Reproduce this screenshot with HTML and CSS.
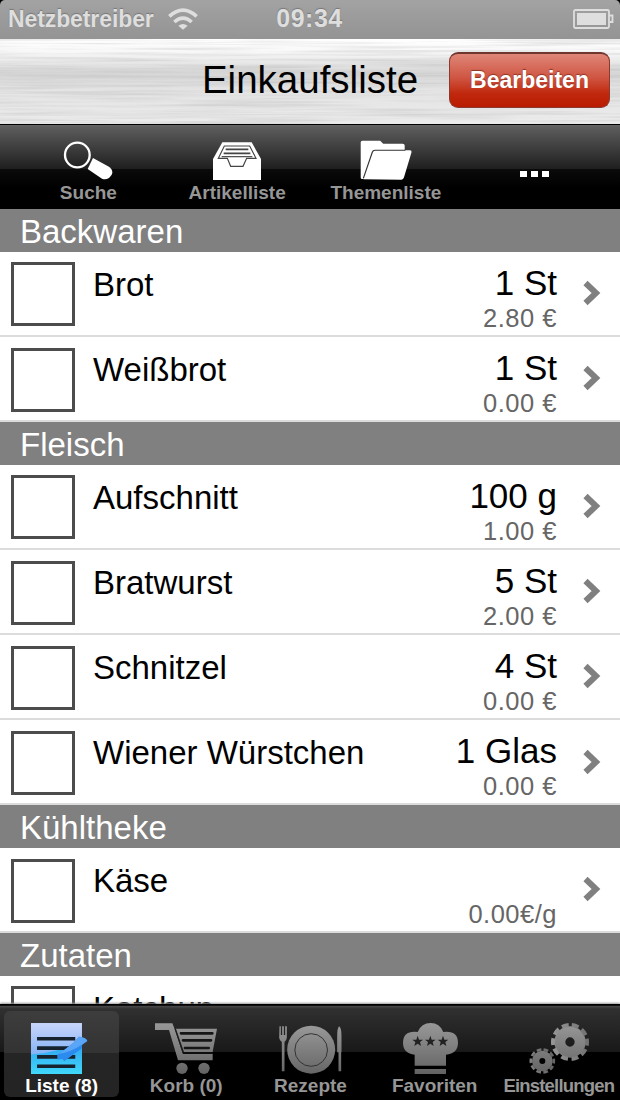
FILE: index.html
```html
<!DOCTYPE html>
<html lang="de">
<head>
  <meta charset="UTF-8" />
  <meta name="viewport" content="width=device-width, initial-scale=1.0" />
  <title>Einkaufsliste</title>
  <link rel="stylesheet" href="styles.css">
</head>

<body>
  <div class="app">
    <div class="statusbar">
      <div class="netz">
        <span>Netzbetreiber</span>
        <svg width="30" height="22" viewBox="0 0 90 66">
          <g fill="none" stroke="#dedede" stroke-width="11">
            <path d="M4 25 Q45 -12 86 25" />
            <path d="M19 42 Q45 19 71 42" />
          </g>
          <path d="M45 65 L31 53 Q45 43 59 53 Z" fill="#dedede" />
        </svg>
      </div>
      <span class="uhr">09:34</span>
      <svg class="akku" width="41" height="20" viewBox="0 0 41 20">
        <rect x="1" y="1" width="35" height="18" rx="1.5" fill="none" stroke="#dedede" stroke-width="1.8" />
        <rect x="4" y="4" width="29" height="12" fill="#dedede" />
        <path d="M36.500 6.500 H39.500 V13 H36.500" fill="none" stroke="#dedede" stroke-width="1.800" />
      </svg>
    </div>

    <header class="titel">
      <svg class="metall" width="620" height="85">
        <filter id="metall" x="0" y="0" width="100%" height="100%">
          <feTurbulence type="fractalNoise" baseFrequency="0.006 0.35" numOctaves="3" seed="4" />
          <feColorMatrix values="0 0 0 0 0.4  0 0 0 0 0.4  0 0 0 0 0.4  0.7 0 0 0 -0.27" />
        </filter>
        <rect width="620" height="85" filter="url(#metall)" />
      </svg>
      <h1>Einkaufsliste</h1>
      <button class="bearbeiten">Bearbeiten</button>
    </header>

    <nav class="toolbar">
      <a>
        <svg width="50" height="41" viewBox="0 0 150 123">
          <circle cx="43" cy="48" r="37" fill="none" stroke="#fff" stroke-width="7" />
          <path d="M90 57 L135 82 Q153 93 146 107 Q134 126 117 119 L74 90 Z" fill="#fff" />
        </svg>
        <span>Suche</span>
      </a>
      <a>
        <svg width="48" height="38" viewBox="0 0 144 114">
          <path d="M28 1 H116 L144 51 V114 H0 V51 Z" fill="#fff" />
          <g fill="none" stroke="#444" stroke-width="3.500">
            <path d="M34 12 H110 L129 49 H101 L90 73 H53 L43 49 H16 Z" />
            <path d="M38 22 H106 M32 34 H112" stroke-width="5" />
            <path d="M26 44 H118" />
          </g>
        </svg>
        <span>Artikelliste</span>
      </a>
      <a>
        <svg width="52" height="40" viewBox="0 0 157 121">
          <path d="M2 7 Q2 2 7 2 H61 L70 11 H129 Q135 11 135 17 V60 L110 118 H6 Q2 118 2 114 Z" fill="#fff" />
          <path d="M10 119 L37 37 Q39 31 45 31 H150 Q158 31 155 39 L133 113 Q131 120 125 120 Z" fill="#fff" />
          <path d="M10 116 L37 37 Q39 31 45 31 H137" fill="none" stroke="#333" stroke-width="3.500" />
        </svg>
        <span>Themenliste</span>
      </a>
      <a class="mehr"><i></i><i></i><i></i></a>
    </nav>

    <main class="liste">
      <h2>Backwaren</h2>
      <div class="artikel">
        <span class="box"></span>
        <p class="name">Brot</p>
        <div class="menge"><b>1 St</b><small>2.80 €</small></div>
        <svg class="pfeil" width="18" height="26" viewBox="0 0 18 26"><path d="M2.500 3 L13 13 L2.500 23" /></svg>
      </div>
      <div class="artikel">
        <span class="box"></span>
        <p class="name">Weißbrot</p>
        <div class="menge"><b>1 St</b><small>0.00 €</small></div>
        <svg class="pfeil" width="18" height="26" viewBox="0 0 18 26"><path d="M2.500 3 L13 13 L2.500 23" /></svg>
      </div>

      <h2>Fleisch</h2>
      <div class="artikel">
        <span class="box"></span>
        <p class="name">Aufschnitt</p>
        <div class="menge"><b>100 g</b><small>1.00 €</small></div>
        <svg class="pfeil" width="18" height="26" viewBox="0 0 18 26"><path d="M2.500 3 L13 13 L2.500 23" /></svg>
      </div>
      <div class="artikel">
        <span class="box"></span>
        <p class="name">Bratwurst</p>
        <div class="menge"><b>5 St</b><small>2.00 €</small></div>
        <svg class="pfeil" width="18" height="26" viewBox="0 0 18 26"><path d="M2.500 3 L13 13 L2.500 23" /></svg>
      </div>
      <div class="artikel">
        <span class="box"></span>
        <p class="name">Schnitzel</p>
        <div class="menge"><b>4 St</b><small>0.00 €</small></div>
        <svg class="pfeil" width="18" height="26" viewBox="0 0 18 26"><path d="M2.500 3 L13 13 L2.500 23" /></svg>
      </div>
      <div class="artikel">
        <span class="box"></span>
        <p class="name">Wiener Würstchen</p>
        <div class="menge"><b>1 Glas</b><small>0.00 €</small></div>
        <svg class="pfeil" width="18" height="26" viewBox="0 0 18 26"><path d="M2.500 3 L13 13 L2.500 23" /></svg>
      </div>

      <h2>Kühltheke</h2>
      <div class="artikel">
        <span class="box"></span>
        <p class="name">Käse</p>
        <div class="menge"><b></b><small>0.00€/g</small></div>
        <svg class="pfeil" width="18" height="26" viewBox="0 0 18 26"><path d="M2.500 3 L13 13 L2.500 23" /></svg>
      </div>

      <h2>Zutaten</h2>
      <div class="artikel">
        <span class="box"></span>
        <p class="name">Ketchup</p>
      </div>
    </main>

    <nav class="tabs">
      <a class="aktiv">
        <svg width="57" height="51" viewBox="0 0 170 152">
          <defs>
            <linearGradient id="blau" x1="0" y1="0" x2="0" y2="1">
              <stop offset="0" stop-color="#c9d6fc" />
              <stop offset="1" stop-color="#5a9cf0" />
            </linearGradient>
            <linearGradient id="cyan" x1="0" y1="0" x2="0" y2="1">
              <stop offset="0" stop-color="#2f9df0" />
              <stop offset="1" stop-color="#3fd8fa" />
            </linearGradient>
            <linearGradient id="grau" x1="0" y1="0" x2="0" y2="153" gradientUnits="userSpaceOnUse">
              <stop offset="0" stop-color="#989898" />
              <stop offset="1" stop-color="#636363" />
            </linearGradient>
          </defs>
          <rect width="152" height="152" fill="url(#blau)" />
          <path d="M0 94 Q80 88 152 55 V152 H0 Z" fill="url(#cyan)" />
          <path d="M18 47 H132 M18 75 H132 M18 101 H132 M18 129 H132" stroke="#16232e" stroke-width="11" />
          <path d="M143 41 Q163 42 168 54 L153 64 L151 76 L99 114 L94 107 L79 109 L78 94 L84 92 L125 60 Z" fill="#2b8bee" />
          <path d="M143 41 Q163 42 168 54 L153 64 Q120 86 84 92 L125 60 Z" fill="#5aa5f5" />
        </svg>
        <span>Liste (8)</span>
      </a>
      <a>
        <svg width="62" height="51" viewBox="0 0 186 153">
          <g fill="url(#grau)">
            <path d="M0 1 H52 L59 18 L84 93 H173 V112 H69 L42 21 H0 Z" />
            <path d="M63 17 H186 L173 87 H87 Z" />
            <circle cx="81" cy="136" r="17" />
            <circle cx="147" cy="136" r="17" />
          </g>
          <path d="M78 31 H172 M84 52 H168 M90 75 H161" stroke="#151515" stroke-width="8" stroke-linecap="round" />
          <path d="M60 17 L84 90 H174" fill="none" stroke="#1d1d1d" stroke-width="3" />
        </svg>
        <span>Korb (0)</span>
      </a>
      <a>
        <svg width="63" height="51" viewBox="0 -8 188 153">
          <g fill="url(#grau)">
            <circle cx="96" cy="72" r="72" />
            <path d="M1 2 H5 V28 H9 V2 H14 V28 H18 V2 H23 V36 Q22 45 16 49 V137 H8 V49 Q1 45 0 36 Z" />
            <path d="M180 2 Q187 6 187 34 V80 H186 V137 H178 V80 H174 V34 Q174 6 180 2 Z" />
          </g>
          <circle cx="96" cy="73" r="49" fill="none" stroke="#333" stroke-width="3" />
        </svg>
        <span>Rezepte</span>
      </a>
      <a>
        <svg class="hut" width="55" height="51" viewBox="0 0 165 153">
          <path d="M44 27 Q55 0 83 0 Q110 0 121 27 Q165 22 165 60 Q164 92 129 95 V128 H35 V95 Q1 92 0 60 Q0 22 44 27 Z M35 138 H129 V153 H35 Z" fill="url(#grau)" />
          <g fill="#222">
            <path id="stern" d="M44 38 L48 50 L60 50 L51 57 L54 69 L44 62 L34 69 L37 57 L28 50 L40 50 Z" />
            <use href="#stern" x="38" />
            <use href="#stern" x="76" />
          </g>
        </svg>
        <span>Favoriten</span>
      </a>
      <a class="eng">
        <svg width="60" height="51" viewBox="0 0 180 153">
          <g fill="none" stroke="url(#grau)">
            <circle cx="123" cy="57" r="30.500" stroke-width="33" />
            <circle cx="123" cy="57" r="51" stroke-width="12" pathLength="100" stroke-dasharray="6.500 3.500" stroke-dashoffset="-1.750" transform="rotate(-90 123 57)" />
            <circle cx="40" cy="114" r="20" stroke-width="22" />
            <circle cx="40" cy="114" r="34.500" stroke-width="8" pathLength="100" stroke-dasharray="6.500 3.500" stroke-dashoffset="-1.750" transform="rotate(-90 40 114)" />
          </g>
        </svg>
        <span>Einstellungen</span>
      </a>
    </nav>
  </div>
</body>
</html>
```

FILE: styles.css
```css
* {
  box-sizing: border-box;
}

body {
  margin: 0;
  background: #000;
  font-family: "Liberation Sans", Arial, sans-serif;
}

.app {
  display: flex;
  flex-direction: column;
  width: 620px;
  height: 1100px;
  overflow: hidden;
}

svg {
  display: block;
  flex: none;
}

/* Statusleiste */
.statusbar {
  display: grid;
  grid-template-columns: 1fr auto 1fr;
  align-items: center;
  height: 39px;
  padding: 0 6px 2px 8px;
  background: linear-gradient(#a3a3a3, #999 60%, #949494);
  border-radius: 5px 5px 0 0;
  color: #dedede;
  font-size: 23px;
  font-weight: bold;
  text-shadow: 0 -1px 1px #777;
}

.netz {
  display: flex;
  align-items: center;
  gap: 14px;
  padding-top: 1px;
  letter-spacing: -0.1px;
}

.uhr {
  margin-right: 3px;
  font-size: 25px;
  letter-spacing: 0.5px;
}

.akku {
  justify-self: end;
}

/* Titel */
.titel {
  position: relative;
  display: grid;
  grid-template-columns: 1fr auto 1fr;
  align-items: center;
  height: 85px;
  padding: 0 10px 3px;
  background: linear-gradient(#fff, #f8f8f8 15%, #e2e2e2 32%, #d6d6d6 40%, #e4e4e4 60%, #ebebeb);
}

.metall {
  position: absolute;
  top: 0;
  left: 0;
}

.titel h1 {
  position: relative;
  grid-column: 2;
  margin: 0;
  font-size: 38.5px;
  font-weight: normal;
  line-height: 44px;
}

.bearbeiten {
  position: relative;
  justify-self: end;
  width: 161px;
  height: 56px;
  padding: 0;
  border: 1px solid #8c3a30;
  border-top: 2px solid #70372f;
  border-radius: 9px;
  background: linear-gradient(#df8678, #cf5542 45%, #c0280d 75%, #b91b00);
  color: #fff;
  font-family: inherit;
  font-size: 23px;
  font-weight: bold;
  text-shadow: 0 -1px 1px #8d3325;
}

/* Werkzeugleiste */
.toolbar {
  display: flex;
  height: 85px;
  padding: 0 11px 0 14px;
  border-top: 1px solid #000;
  background: linear-gradient(#666, #5c5c5c 3%, #1f1f1f 52%, #0b0b0b 52%, #000 75%);
}

.toolbar a,
.tabs a {
  flex: 1;
  display: flex;
  flex-direction: column;
  align-items: center;
  justify-content: flex-end;
  color: #969696;
  font-size: 19px;
  font-weight: bold;
  line-height: 22px;
}

.toolbar a {
  padding-bottom: 5px;
}

.toolbar span {
  margin-top: 2px;
}

.toolbar .mehr {
  flex-direction: row;
  align-items: flex-end;
  justify-content: center;
  gap: 4.5px;
  padding-bottom: 32px;
}

.mehr i {
  width: 6.5px;
  height: 6.5px;
  background: #fff;
}

/* Liste */
.liste {
  flex: 1;
  min-height: 0;
  overflow: hidden;
  background: #fff;
}

.liste h2 {
  height: 42.6px;
  margin: 0;
  padding: 3px 20px 0;
  background: #808080;
  color: #fff;
  font-size: 33px;
  font-weight: normal;
  line-height: 40px;
}

.artikel {
  display: flex;
  height: 85.2px;
  padding: 10px 19px 0 11px;
  border-bottom: 2px solid #dcdcdc;
}

.box {
  width: 64px;
  height: 64px;
  margin-top: 0.8px;
  border: 3px solid #4c4c4c;
}

.name {
  flex: 1;
  margin: 3px 0 0 18px;
  font-size: 33px;
  line-height: 40px;
}

.menge {
  display: flex;
  flex-direction: column;
  align-items: flex-end;
  margin-right: 26px;
}

.menge b {
  height: 40px;
  padding-top: 1px;
  font-size: 35px;
  font-weight: normal;
  line-height: 40px;
}

.menge small {
  color: #666;
  font-size: 25.5px;
  letter-spacing: 0.5px;
  line-height: 32px;
}

.pfeil {
  margin-top: 18.5px;
}

.pfeil path {
  fill: none;
  stroke: #808080;
  stroke-width: 6;
}

/* Tableiste */
.tabs {
  display: grid;
  grid-template-columns: repeat(5, 124.2px);
  height: 96px;
  padding-top: 6px;
  border-top: 1px solid #000;
  background: linear-gradient(#111 1px, #4a4a4a 1px, #303030 4px, #181818 50%, #000 50%);
  box-shadow: 0 -1px 2px #999;
  z-index: 1;
}

.tabs a {
  padding-bottom: 3px;
}

.tabs span {
  margin-top: 1px;
  white-space: nowrap;
}

.tabs .aktiv {
  margin: 0 5px 3px 4px;
  padding-bottom: 0;
  border-radius: 6px;
  background: linear-gradient(#3d3d3d, #333 49%, #252525 49%, #242424);
  color: #fff;
}

.aktiv svg {
  margin-right: 5px;
}

.tabs .hut {
  margin-right: 8px;
}

.tabs .eng {
  font-size: 18.5px;
  letter-spacing: -0.8px;
}
```
